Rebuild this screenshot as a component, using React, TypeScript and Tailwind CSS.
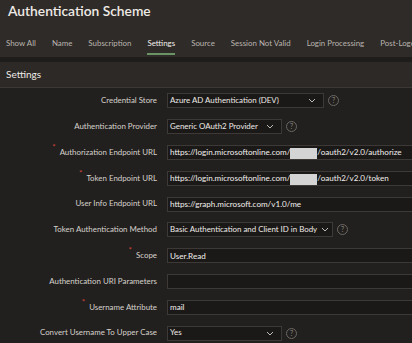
import React from 'react';

const tabs = ['Show All', 'Name', 'Subscription', 'Settings', 'Source', 'Session Not Valid', 'Login Processing', 'Post-Logout URL'];

type Row = {
  label: string;
  required?: boolean;
  kind: 'select' | 'text';
  value?: React.ReactNode;
  width?: string;
  help?: boolean;
};

const Redacted = () => <span className="inline-block w-[27px] h-[11px] bg-[#d4d4d4] align-middle" />;

const rows: Row[] = [
  { label: 'Credential Store', kind: 'select', value: 'Azure AD Authentication (DEV)', width: 'w-[157px]', help: true },
  { label: 'Authentication Provider', kind: 'select', value: 'Generic OAuth2 Provider', width: 'w-[115px]', help: true },
  {
    label: 'Authorization Endpoint URL',
    required: true,
    kind: 'text',
    value: (
      <>
        https://login.microsoftonline.com/<Redacted />/oauth2/v2.0/authorize
      </>
    ),
  },
  {
    label: 'Token Endpoint URL',
    required: true,
    kind: 'text',
    value: (
      <>
        https://login.microsoftonline.com/<Redacted />/oauth2/v2.0/token
      </>
    ),
  },
  { label: 'User Info Endpoint URL', kind: 'text', value: 'https://graph.microsoft.com/v1.0/me' },
  { label: 'Token Authentication Method', kind: 'select', value: 'Basic Authentication and Client ID in Body', width: 'w-[166px]', help: true },
  { label: 'Scope', required: true, kind: 'text', value: 'User.Read' },
  { label: 'Authentication URI Parameters', kind: 'text', value: '' },
  { label: 'Username Attribute', required: true, kind: 'text', value: 'mail' },
  { label: 'Convert Username To Upper Case', kind: 'select', value: 'Yes', width: 'w-[115px]', help: true },
];

const Chevron = () => (
  <svg width="8" height="5" viewBox="0 0 8 5" className="shrink-0 ml-auto">
    <path d="M1 1l3 3 3-3" fill="none" stroke="#bdb9b4" strokeWidth="1" />
  </svg>
);

const Help = () => (
  <span className="ml-[4px] w-[11px] h-[11px] rounded-full border border-[#6b6763] text-[#8a8682] text-[7px] leading-none flex items-center justify-center">
    ?
  </span>
);

export default function App() {
  return (
    <div className="w-[412px] h-[343px] overflow-hidden bg-[#2f2b28] font-['Lato',sans-serif] text-[#d8d4cf]">
      {/* header */}
      <div className="h-[57px] flex flex-col">
        <h1 className="pl-[8px] text-[13.8px] font-semibold text-[#eeeae6] leading-[22px]">Authentication Scheme</h1>
        <div className="mt-[15px] flex gap-[16px] pl-[6px] whitespace-nowrap overflow-hidden">
          {tabs.map((t) => (
            <div key={t} className="flex flex-col items-center shrink-0">
              <span className={`text-[7.9px] leading-[12px] ${t === 'Settings' ? 'text-[#f2efec]' : 'text-[#b9b4af]'}`}>{t}</span>
              <span className={`mt-[4px] h-[2px] w-full ${t === 'Settings' ? 'bg-[#6a9466]' : 'bg-transparent'}`} />
            </div>
          ))}
        </div>
      </div>
      <div className="h-[5px] bg-[#1f1d1b]" />
      {/* settings region header */}
      <div className="h-[26px] bg-[#2c2926] border-b border-[#3b3835] flex items-center pl-[6px]">
        <span className="text-[10px] text-[#efebe7]">Settings</span>
      </div>
      {/* form */}
      <div className="bg-[#22201e] flex flex-col">
        {rows.map((r) => (
          <div key={r.label} className="h-[25.8px] flex items-center">
            <div className="w-[157px] shrink-0 text-right text-[7.9px] text-[#d6d2cd] whitespace-nowrap">
              {r.required && <span className="text-[#d8433a] text-[8px] relative top-[-5px] mr-[4px]">*</span>}
              {r.label}
            </div>
            <div className="ml-[10px] flex items-center flex-1 min-w-0">
              {r.kind === 'select' ? (
                <>
                  <div className={`${r.width} h-[15px] bg-[#1b1918] border border-[#3c3936] flex items-center pl-[2px] pr-[7px] gap-[4px]`}>
                    <span className="text-[7.9px] text-[#eeeae6] whitespace-nowrap">{r.value}</span>
                    <Chevron />
                  </div>
                  {r.help && <Help />}
                </>
              ) : (
                <div className="flex-1 h-[15px] bg-[#1b1918] border border-r-0 border-[#3c3936] flex items-center pl-[2px] overflow-hidden">
                  <span className="text-[8.1px] text-[#f2efec] whitespace-nowrap">{r.value}</span>
                </div>
              )}
            </div>
          </div>
        ))}
      </div>
    </div>
  );
}
